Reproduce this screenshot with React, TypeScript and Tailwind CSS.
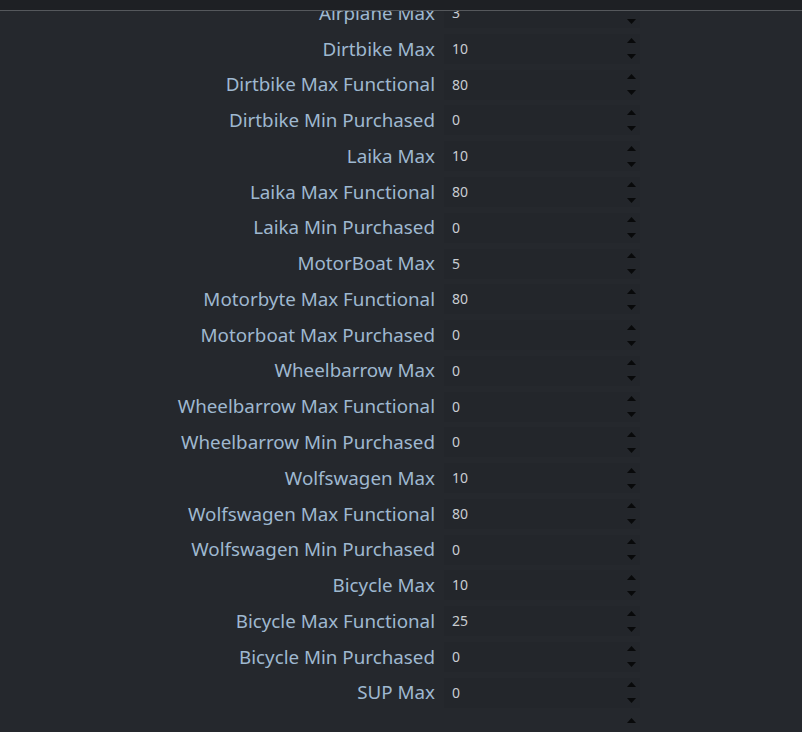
const rows: [string, string][] = [
  ["Airplane Max", "3"],
  ["Dirtbike Max", "10"],
  ["Dirtbike Max Functional", "80"],
  ["Dirtbike Min Purchased", "0"],
  ["Laika Max", "10"],
  ["Laika Max Functional", "80"],
  ["Laika Min Purchased", "0"],
  ["MotorBoat Max", "5"],
  ["Motorbyte Max Functional", "80"],
  ["Motorboat Max Purchased", "0"],
  ["Wheelbarrow Max", "0"],
  ["Wheelbarrow Max Functional", "0"],
  ["Wheelbarrow Min Purchased", "0"],
  ["Wolfswagen Max", "10"],
  ["Wolfswagen Max Functional", "80"],
  ["Wolfswagen Min Purchased", "0"],
  ["Bicycle Max", "10"],
  ["Bicycle Max Functional", "25"],
  ["Bicycle Min Purchased", "0"],
  ["SUP Max", "0"],
  ["", ""],
];

const Spinner = () => (
  <div className="flex flex-col items-center gap-[11px] w-[10px]">
    <svg width="9" height="5" viewBox="0 0 9 5">
      <path d="M4.5 0 L9 5 L0 5 Z" fill="#08090a" />
    </svg>
    <svg width="9" height="5" viewBox="0 0 9 5">
      <path d="M0 0 L9 0 L4.5 5 Z" fill="#08090a" />
    </svg>
  </div>
);

export default function App() {
  return (
    <div
      className="w-[802px] h-[732px] bg-[#25282d] flex flex-col overflow-hidden"
      style={{ fontFamily: "'Noto Sans', 'Open Sans', sans-serif" }}
    >
      <div className="h-[10px] bg-[#1e2024] border-b border-[#55585c] shrink-0 box-content" />
      <div className="flex-1 overflow-hidden">
        <div className="flex flex-col mt-[-15.7px]">
          {rows.map(([label, value], i) => (
            <div key={i} className="h-[35.78px] flex items-center">
              <div className="w-[435px] text-right text-[18.8px] text-[#9fb8d0] whitespace-nowrap leading-none">
                {label}
              </div>
              <div
                className={
                  "ml-[9px] w-[196px] h-[30px] flex items-center pl-[8px] pr-[4px] " +
                  (label ? "bg-[#23262b]" : "")
                }
              >
                <span className="flex-1 text-[14px] text-[#c9cdd2] leading-none">{value}</span>
                <Spinner />
              </div>
            </div>
          ))}
        </div>
      </div>
    </div>
  );
}
